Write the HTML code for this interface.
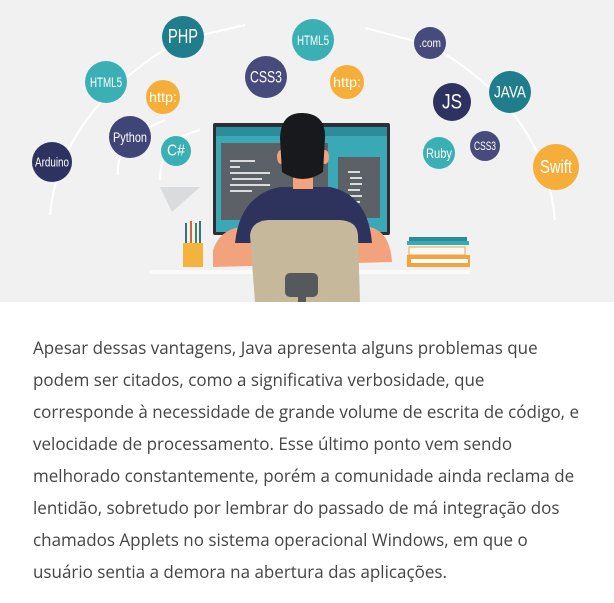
<!DOCTYPE html>
<html><head><meta charset="utf-8"><style>
html,body{margin:0;padding:0;background:#fff;width:614px;height:603px;overflow:hidden}
.ill{position:absolute;left:0;top:0;width:614px;height:302px;background:#f1f1f1}
p{position:absolute;left:33px;top:332px;width:590px;margin:0;font-family:"Open Sans","Liberation Sans",sans-serif;font-size:17px;line-height:32px;color:#444;white-space:nowrap}
svg text{font-family:"Liberation Sans",sans-serif;fill:#fff;text-anchor:middle;dominant-baseline:central}
</style></head><body>
<div class="ill">
<svg width="614" height="302" viewBox="0 0 614 302">
<g fill="none" stroke="#fff" stroke-width="2">
<path d="M50 215 Q60 110 180 40 L245 25"/>
<path d="M118 175 Q115 140 165 120"/>
<path d="M555 220 Q545 110 430 45 L365 28"/>
<path d="M160 180 Q160 140 200 130"/>
</g>
<rect x="213" y="123" width="177" height="112" fill="#2e2f33" rx="2"/>
<rect x="216" y="127" width="171" height="105" fill="#3aa8b5"/>
<rect x="216" y="127" width="171" height="9" fill="#2b8d9c"/>
<rect x="221" y="143" width="107" height="77" fill="#5b6166"/>
<rect x="338" y="157" width="42" height="61" fill="#5b6166"/>
<g stroke="#dcdcdc" stroke-width="2"><path d="M230 161h25M230 167h10M230 173h40M232 179h30M230 185h40M230 191h22"/><path d="M348 172h12M350 178h12M350 184h12M348 190h12M350 196h12M348 202h12"/></g>
<path d="M200 187 L160 187 L172 212 Z" fill="#d9dbdc"/>
<rect x="183" y="243" width="20" height="24" fill="#f3b33c"/>
<g stroke-width="2"><path d="M186 243v-20" stroke="#3c6f7a"/><path d="M191 243v-22" stroke="#d3653f"/><path d="M196 243v-20" stroke="#3b8a55"/><path d="M200 243v-22" stroke="#3c6f7a"/></g>
<rect x="150" y="270" width="320" height="4" fill="#fafafa"/>
<rect x="409" y="237" width="58" height="4" fill="#2b8d9c"/>
<rect x="407" y="241" width="62" height="4" fill="#3aa8b5"/>
<rect x="409" y="247" width="56" height="8" fill="#f8f8f8" stroke="#f3a43c"/>
<rect x="407" y="255" width="63" height="12" fill="#f3a43c"/>
<rect x="411" y="259" width="57" height="4" fill="#fff"/>
<path d="M213 250 Q220 230 240 227 L370 227 Q390 232 392 262 L213 267 Z" fill="#f2a37d"/>
<path d="M235 243 Q240 195 280 187 L330 187 Q368 195 372 243 Z" fill="#2e335e"/>
<ellipse cx="281" cy="157" rx="4" ry="7" fill="#f2a37d"/><ellipse cx="325" cy="157" rx="4" ry="7" fill="#f2a37d"/>
<rect x="293" y="175" width="20" height="14" fill="#f2a37d"/>
<path d="M280 138 Q281 112 303 113 Q326 114 325 138 L323 172 Q303 186 282 172 Z" fill="#17191c"/>
<path d="M255 302 L250 235 Q252 221 268 220 L340 220 Q357 221 358 235 L360 302 Z" fill="#c5b89b"/>
<rect x="285" y="273" width="33" height="24" rx="5" fill="#55595c"/>
<rect x="298" y="295" width="8" height="7" fill="#55595c"/>
<g>
<circle cx="183" cy="37" r="21" fill="#1f7d8c"/><text x="183" y="37" font-size="20" textLength="30" lengthAdjust="spacingAndGlyphs">PHP</text>
<circle cx="106" cy="82" r="21" fill="#3ab0b5"/><text x="106" y="82" font-size="14" textLength="32" lengthAdjust="spacingAndGlyphs">HTML5</text>
<circle cx="163" cy="97" r="17" fill="#f6ae3b"/><text x="163" y="97" font-size="14" textLength="28" lengthAdjust="spacingAndGlyphs">http:</text>
<circle cx="130" cy="137" r="21" fill="#3f4577"/><text x="130" y="137" font-size="14" textLength="34" lengthAdjust="spacingAndGlyphs">Python</text>
<circle cx="176" cy="151" r="15" fill="#3ab0b5"/><text x="176" y="151" font-size="16" textLength="18" lengthAdjust="spacingAndGlyphs">C#</text>
<circle cx="52" cy="162" r="20" fill="#2d3260"/><text x="52" y="162" font-size="13" textLength="34" lengthAdjust="spacingAndGlyphs">Arduino</text>
<circle cx="266" cy="77" r="21" fill="#464b7c"/><text x="266" y="77" font-size="17" textLength="32" lengthAdjust="spacingAndGlyphs">CSS3</text>
<circle cx="313" cy="40" r="21" fill="#3ab0b5"/><text x="313" y="40" font-size="14" textLength="32" lengthAdjust="spacingAndGlyphs">HTML5</text>
<circle cx="347" cy="82" r="17" fill="#f6ae3b"/><text x="347" y="82" font-size="14" textLength="28" lengthAdjust="spacingAndGlyphs">http:</text>
<circle cx="430" cy="43" r="16" fill="#464b7c"/><text x="430" y="43" font-size="12" textLength="22" lengthAdjust="spacingAndGlyphs">.com</text>
<circle cx="452" cy="102" r="19" fill="#2d3260"/><text x="452" y="102" font-size="21" textLength="20" lengthAdjust="spacingAndGlyphs">JS</text>
<circle cx="510" cy="92" r="21" fill="#1f7d8c"/><text x="510" y="92" font-size="17" textLength="32" lengthAdjust="spacingAndGlyphs">JAVA</text>
<circle cx="439" cy="153" r="16" fill="#3ab0b5"/><text x="439" y="153" font-size="14" textLength="26" lengthAdjust="spacingAndGlyphs">Ruby</text>
<circle cx="485" cy="146" r="15" fill="#464b7c"/><text x="485" y="146" font-size="12" textLength="22" lengthAdjust="spacingAndGlyphs">CSS3</text>
<circle cx="556" cy="167" r="23" fill="#f6ae3b"/><text x="556" y="167" font-size="18" textLength="32" lengthAdjust="spacingAndGlyphs">Swift</text>
</g>
</svg>
</div>
<p>Apesar dessas vantagens, Java apresenta alguns problemas que<br>podem ser citados, como a significativa verbosidade, que<br>corresponde à necessidade de grande volume de escrita de código, e<br>velocidade de processamento. Esse último ponto vem sendo<br>melhorado constantemente, porém a comunidade ainda reclama de<br>lentidão, sobretudo por lembrar do passado de má integração dos<br>chamados Applets no sistema operacional Windows, em que o<br>usuário sentia a demora na abertura das aplicações.</p>
</body></html>
